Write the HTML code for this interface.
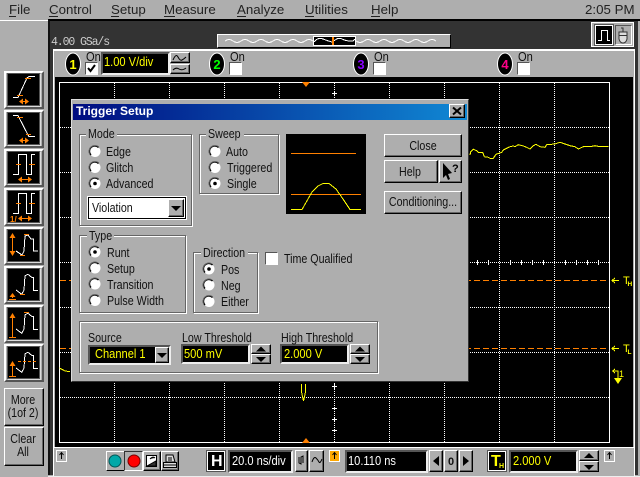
<!DOCTYPE html>
<html><head><meta charset="utf-8"><style>
html,body{margin:0;padding:0}
body{width:640px;height:477px;position:relative;overflow:hidden;background:#aeaeae}
div{position:absolute;box-sizing:border-box}
svg{position:absolute;left:0;top:0}
.r{background:#aeaeae;border:1px solid;border-color:#fff #000 #000 #fff;box-shadow:inset -1px -1px 0 #666}
.p{background:#aeaeae;border:1px solid;border-color:#fff #555 #555 #fff;border-width:2px}
.k{background:#000;border:2px solid;border-color:#555 #eee #eee #555}
.e{border:1px solid #666;box-shadow:1px 1px 0 #fff,inset 1px 1px 0 #fff}
.i{background:#000;left:7px;width:33px;height:33px;border:1px solid #555;box-shadow:1px 1px 0 #ddd}
text{font-family:"Liberation Sans",sans-serif;font-size:12.5px;fill:#111;transform-box:fill-box;transform-origin:0 100%;transform:scaleX(.855)}
.m{font-size:13.3px;fill:#222;transform:none}
.n{transform:none}
.y{fill:#ff0;font-size:13px}
.w{fill:#fff;font-size:13px}
.c{text-anchor:middle;transform-origin:50% 100%}
.ln{fill:none;stroke:#fff;stroke-width:1;shape-rendering:crispEdges}
.o{fill:none;stroke:#ff8000;stroke-width:1;shape-rendering:crispEdges}
.ye{fill:none;stroke:#ff0;stroke-width:1;shape-rendering:crispEdges}
.wv{fill:none;stroke:#fff;stroke-width:1;shape-rendering:crispEdges}
.or{fill:#ff8000}
</style></head><body>
<!-- main frame -->
<div style="left:0;top:20px;width:48px;height:1px;background:#fff"></div>
<div style="left:48px;top:19px;width:592px;height:456px;background:#333;border-top:2px solid #000;border-left:2px solid #111"></div>
<div style="left:638px;top:21px;width:2px;height:456px;background:#aeaeae"></div>
<div style="left:48px;top:476px;width:592px;height:1px;background:#eee"></div>
<!-- top strip -->
<div style="left:217px;top:34px;width:234px;height:14px;background:#aeaeae;border:1px solid;border-color:#fff #000 #000 #fff"></div>
<div style="left:313px;top:36px;width:43px;height:10px;background:#000;border:1px solid #fff"></div>
<div style="left:332px;top:37px;width:2px;height:8px;background:#ff8000"></div>
<div style="left:591px;top:22px;width:43px;height:25px;background:#aeaeae;border:1px solid #fff"></div>
<div style="left:595px;top:25px;width:18px;height:20px;background:#000;border:1px solid #fff;box-shadow:0 0 0 1px #555"></div>
<div style="left:615px;top:25px;width:17px;height:20px;background:#aeaeae;border:1px solid;border-color:#555 #fff #fff #555"></div>
<!-- panel -->
<div style="left:53px;top:49px;width:582px;height:427px;background:#aeaeae;border-top:2px solid #fff;border-left:1px solid #fff;border-right:1px solid #fff"></div>
<div style="left:55px;top:77px;width:578px;height:370px;background:#000"></div>
<div style="left:54px;top:447px;width:580px;height:1px;background:#fff"></div>
<div style="left:59px;top:82px;width:551px;height:361px;border:1px solid #fff"></div>
<!-- channel controls -->
<div class="k" style="left:101px;top:52px;width:69px;height:23px"></div>
<div class="r" style="left:170px;top:52px;width:20px;height:11px"></div>
<div class="r" style="left:170px;top:64px;width:20px;height:10px"></div>
<div style="left:85px;top:62px;width:13px;height:13px;background:#fff;border:1px solid;border-color:#555 #fff #fff #555"></div>
<div style="left:229px;top:62px;width:13px;height:13px;background:#fff;border:1px solid;border-color:#555 #fff #fff #555"></div>
<div style="left:373px;top:62px;width:13px;height:13px;background:#fff;border:1px solid;border-color:#555 #fff #fff #555"></div>
<div style="left:517px;top:62px;width:13px;height:13px;background:#fff;border:1px solid;border-color:#555 #fff #fff #555"></div>
<!-- left buttons -->
<div class="p" style="left:4px;top:71px;width:40px;height:38px"></div><div class="i" style="top:73px"></div>
<div class="p" style="left:4px;top:110px;width:40px;height:38px"></div><div class="i" style="top:112px"></div>
<div class="p" style="left:4px;top:149px;width:40px;height:38px"></div><div class="i" style="top:151px"></div>
<div class="p" style="left:4px;top:188px;width:40px;height:38px"></div><div class="i" style="top:190px"></div>
<div class="p" style="left:4px;top:227px;width:40px;height:38px"></div><div class="i" style="top:229px"></div>
<div class="p" style="left:4px;top:266px;width:40px;height:38px"></div><div class="i" style="top:268px"></div>
<div class="p" style="left:4px;top:305px;width:40px;height:38px"></div><div class="i" style="top:307px"></div>
<div class="p" style="left:4px;top:344px;width:40px;height:38px"></div><div class="i" style="top:346px"></div>
<div class="r" style="left:4px;top:388px;width:40px;height:38px"></div>
<div class="r" style="left:4px;top:427px;width:40px;height:39px"></div>
<!-- bottom bar -->
<div style="left:56px;top:450px;width:11px;height:12px;border:1px solid #fff"></div>
<div style="left:106px;top:451px;width:19px;height:20px;background:#aeaeae;border:1px solid;border-color:#fff #000 #000 #fff"></div>
<div style="left:124px;top:451px;width:19px;height:20px;background:#aeaeae;border:1px solid;border-color:#333 #fff #fff #333"></div>
<div class="r" style="left:143px;top:451px;width:18px;height:20px"></div>
<div class="r" style="left:161px;top:451px;width:18px;height:20px"></div>
<div style="left:207px;top:451px;width:18px;height:20px;background:#000;border:1px solid #fff;outline:1px solid #555"></div>
<div class="k" style="left:228px;top:450px;width:65px;height:23px"></div>
<div class="r" style="left:295px;top:450px;width:13px;height:22px"></div>
<div class="r" style="left:309px;top:450px;width:15px;height:22px"></div>
<div style="left:329px;top:450px;width:11px;height:12px;background:#ffa800;border:1px solid #fff"></div>
<div class="k" style="left:345px;top:450px;width:83px;height:23px"></div>
<div class="r" style="left:429px;top:450px;width:14px;height:22px"></div>
<div class="r" style="left:444px;top:450px;width:14px;height:22px"></div>
<div class="r" style="left:459px;top:450px;width:14px;height:22px"></div>
<div style="left:488px;top:451px;width:18px;height:20px;background:#000;border:1px solid #fff;outline:1px solid #555"></div>
<div class="k" style="left:509px;top:450px;width:69px;height:23px"></div>
<div class="r" style="left:579px;top:450px;width:20px;height:11px"></div>
<div class="r" style="left:579px;top:461px;width:20px;height:11px"></div>
<div style="left:604px;top:450px;width:11px;height:12px;border:1px solid #fff"></div>

<!-- graph -->
<svg width="640" height="477" viewBox="0 0 640 477">
<g class="ln" stroke-dasharray="1 1">
<path d="M114.5 83V442M169.5 83V442M224.5 83V442M279.5 83V442M334.5 83V442M389.5 83V442M444.5 83V442M499.5 83V442M554.5 83V442"/>
<path d="M60 127.5H609M60 172.5H609M60 217.5H609M60 262.5H609M60 307.5H609M60 352.5H609M60 397.5H609"/>
</g>
<path class="ln" d="M477.5 260V265M488.5 260V265M510.5 260V265M521.5 260V265M532.5 260V265M543.5 260V265M565.5 260V265M576.5 260V265M587.5 260V265M598.5 260V265M332 93.5H337M334.5 91V96M332 386.5H337M334.5 384V389M332 408.5H337M332 419.5H337M334.5 417V422M332 430.5H337"/>
<path class="o" stroke-dasharray="6 3" d="M60 280.5H609M60 348.5H609"/>
<path class="or" d="M302 82H310L306 87ZM302 443H310L306 438Z"/>
<polyline class="ye" points="470,155 470.7,151.7 473.3,149.3 476.7,150.7 478.3,152.3 482.7,152.3 484.3,156.7 488.3,157.3 490,158.3 493.3,158.3 496,154.3 501.7,152.3 503.3,150 506.7,148.3 510,146.7 513.3,146 515,146.7 518.3,144.7 523.3,146 526.7,147.3 530,149 533.3,145.7 536,144.3 540,146.7 545,147.3 546.7,144.7 555,144 556.7,143.3 560,142.3 565,144 570,145.7 575,146.7 578.3,149 583.3,146.7 590,146.7 595,145.7 600,146.7 608.3,146.3"/>
<polyline class="ye" points="59.5,368 65,371 70,371.7"/>
<path class="ye" d="M301.5 384V392L303.5 401L305.5 392V384"/>
<!-- right markers -->
<path class="ye" d="M612 280.5H619M612 348.5H619M615 278L612 280.5L615 283M615 346L612 348.5L615 351"/>
<path class="ye" d="M612.5 371H618V381M612.5 371L615 369M612.5 371L615 373"/>
<path fill="#ff0" d="M614 378H622L618 384Z"/>
</svg>

<!-- dialog -->
<div style="left:71px;top:99px;width:398px;height:283px;background:#aeaeae;border:1px solid;border-color:#ddd #333 #333 #ddd"></div>
<div style="left:73px;top:104px;width:394px;height:16px;background:linear-gradient(90deg,#000c80,#1088d4)"></div>
<div class="r" style="left:449px;top:104px;width:16px;height:14px;background:#aeaeae"></div>
<div class="e" style="left:79px;top:134px;width:113px;height:92px"></div>
<div class="e" style="left:199px;top:134px;width:80px;height:60px"></div>
<div class="e" style="left:79px;top:235px;width:107px;height:78px"></div>
<div class="e" style="left:193px;top:252px;width:65px;height:61px"></div>
<div class="e" style="left:79px;top:321px;width:299px;height:52px"></div>
<div style="left:86px;top:128px;width:31px;height:12px;background:#aeaeae"></div>
<div style="left:206px;top:128px;width:38px;height:12px;background:#aeaeae"></div>
<div style="left:87px;top:230px;width:27px;height:12px;background:#aeaeae"></div>
<div style="left:201px;top:247px;width:47px;height:12px;background:#aeaeae"></div>
<div style="left:286px;top:134px;width:80px;height:80px;background:#000"></div>
<div class="r" style="left:384px;top:134px;width:78px;height:23px"></div>
<div class="r" style="left:384px;top:160px;width:54px;height:23px"></div>
<div class="r" style="left:439px;top:160px;width:23px;height:23px"></div>
<div class="r" style="left:384px;top:191px;width:78px;height:23px"></div>
<div style="left:88px;top:197px;width:98px;height:22px;background:#fff;border:1px solid #000;outline:1px solid #fff"></div>
<div class="r" style="left:168px;top:199px;width:16px;height:18px"></div>
<div style="left:265px;top:252px;width:13px;height:13px;background:#fff;border:1px solid;border-color:#555 #fff #fff #555"></div>
<div class="k" style="left:88px;top:345px;width:83px;height:20px"></div>
<div class="r" style="left:155px;top:347px;width:14px;height:16px"></div>
<div class="k" style="left:181px;top:344px;width:69px;height:20px"></div>
<div class="r" style="left:251px;top:344px;width:20px;height:10px"></div>
<div class="r" style="left:251px;top:354px;width:20px;height:10px"></div>
<div class="k" style="left:280px;top:344px;width:69px;height:20px"></div>
<div class="r" style="left:350px;top:344px;width:20px;height:10px"></div>
<div class="r" style="left:350px;top:354px;width:20px;height:10px"></div>

<!-- top layer -->
<svg width="640" height="477" viewBox="0 0 640 477">
<defs>
<g id="rd"><circle r="5.5" fill="#fff"/><path d="M-4 3.5A5.3 5.3 0 0 1 3.5 -4" fill="none" stroke="#000" stroke-width="1.4"/><path d="M-5.2 3A6 6 0 0 1 3 -5.2" fill="none" stroke="#666"/></g>
<g id="rs"><use href="#rd"/><circle r="1.8" fill="#000"/></g>
<path id="up" d="M0 -3L-5 2H5Z" fill="#000"/>
<path id="dn" d="M0 3L-5 -2H5Z" fill="#000"/>
</defs>
<!-- menu -->
<text class="m" x="9" y="14">File</text><path d="M9 16.5H16M49 16.5H58M111 16.5H119M164 16.5H175M237 16.5H246M305 16.5H314M371 16.5H380" stroke="#222" stroke-width="1" shape-rendering="crispEdges"/>
<text class="m" x="49" y="14">Control</text>
<text class="m" x="111" y="14">Setup</text>
<text class="m" x="164" y="14">Measure</text>
<text class="m" x="237" y="14">Analyze</text>
<text class="m" x="305" y="14">Utilities</text>
<text class="m" x="371" y="14">Help</text>
<text class="m" x="585" y="14">2:05 PM</text>
<text class="n" x="51" y="45" style="font-family:'Liberation Mono',monospace;font-size:11.5px;letter-spacing:-1.1px;fill:#ccc">4.00 GSa/s</text>
<!-- overview wave -->
<path class="wv" d="M225 41q4 -3 8 0t8 0t8 0t8 0t8 0t8 0t8 0t8 0t8 0t8 0t8 0M314 42q4 -5 9 -3t9 3M334 41q4 -4 8 -2t8 2q3 1 5 -2"/>
<path class="wv" d="M356 41q4 3 8 0t8 0t8 0t8 0t8 0t8 0t8 0t8 0t8 0t8 0"/>
<path class="ln" d="M598 40.500H601.500V30.500H607.500V40.500H610"/>
<path fill="#ddd" stroke="#333" d="M619 32h8v7q-1 4 -4 4t-4 -4z"/><path class="ln" style="stroke:#333" d="M621 28H623V32M619 35.500H627"/>
<!-- channel pills -->
<g stroke="#fff" fill="#000"><ellipse cx="73" cy="64" rx="7.500" ry="11"/><ellipse cx="217" cy="64" rx="7.500" ry="11"/><ellipse cx="361" cy="64" rx="7.500" ry="11"/><ellipse cx="505" cy="64" rx="7.500" ry="11"/></g>
<text class="c n" x="73" y="69" style="font-size:13px;font-weight:bold;fill:#ff0">1</text>
<text class="c n" x="217" y="69" style="font-size:13px;font-weight:bold;fill:#0f0">2</text>
<text class="c n" x="361" y="69" style="font-size:13px;font-weight:bold;fill:#80f">3</text>
<text class="c n" x="505" y="69" style="font-size:13px;font-weight:bold;fill:#f08">4</text>
<text x="86" y="61" style="font-size:13px">On</text><text x="230" y="61" style="font-size:13px">On</text><text x="374" y="61" style="font-size:13px">On</text><text x="518" y="61" style="font-size:13px">On</text>
<path d="M88 68L90.500 71L95 65" fill="none" stroke="#000" stroke-width="2"/>
<text class="y" x="104" y="66">1.00 V/div</text>
<path d="M173 60q3 -7 5 -3t4 3t4 -3M173 70q3 -3 6 -1t7 -1" fill="none" stroke="#000"/>
<!-- left icons -->
<polyline class="ln" points="13,97.500 18,97.500 27,78 29,76.500 35,76.500"/>
<path class="o" d="M25 78.500H31M17 95.500H23"/><path class="or" d="M19 101.500l4 -3v6zM29 101.500l-4 -3v6z"/><path class="o" d="M20 101.500H28"/>
<polyline class="ln" points="13,115.500 18,115.500 28,135 29,136.500 35,136.500"/>
<path class="o" d="M17 117.500H23M26 134.500H31"/><path class="or" d="M19 140.500l4 -3v6zM29 140.500l-4 -3v6z"/><path class="o" d="M20 140.500H28"/>
<polyline class="ln" points="13,174.500 18.500,174.500 18.500,154.500 26.500,154.500 26.500,174.500 31.500,174.500 31.500,154.500 35,154.500"/>
<path class="o" d="M16 164.500H21M29 164.500H35M20 179.500H30"/><path class="or" d="M18 179.500l4 -3v6zM32 179.500l-4 -3v6z"/>
<polyline class="ln" points="13,213.500 18.500,213.500 18.500,193.500 26.500,193.500 26.500,213.500 31.500,213.500 31.500,193.500 35,193.500"/>
<path class="o" d="M16 203.500H21M29 203.500H35M20 218.500H30"/><path class="or" d="M18 218.500l4 -3v6zM32 218.500l-4 -3v6z"/>
<text class="n" x="10" y="222" style="font-size:8px;fill:#ff8000;font-weight:bold">1/</text>
<polyline class="ln" points="16,251 22,255 24,251 25,236 28,235 31,239 33.500,239 33.500,251 38,251"/>
<path class="o" d="M24 234.500H29M20 255.500H25M12.500 236V254"/><path class="or" d="M12.500 233l-3 5h6zM12.500 256l-3 -5h6z"/>
<polyline class="ln" points="16,290 21.700,294.300 24,290 25,275.700 28,274.300 31.700,277.300 33.500,277.300 33.500,290.700 38,290.700"/>
<path class="o" d="M20 294.500H25M9 299.500H16M12.500 296V298"/><path class="or" d="M12.500 293l-3 4h6z"/>
<polyline class="ln" points="16,329 21.700,333.300 24,329 25,314.700 28,313.300 31.700,316.300 33.500,316.300 33.500,329.700 38,329.700"/>
<path class="o" d="M24 312.500H29M9 337.500H16M12.500 316V337"/><path class="or" d="M12.500 313l-3 5h6z"/>
<polyline class="ln" points="16,368 21.700,372.300 24,368 25,353.700 28,352.300 31.700,355.300 33.500,355.300 33.500,368.700 38,368.700"/>
<path class="o" stroke-dasharray="3 2" d="M18 361.500H38"/><path class="o" d="M9 376.500H16M12.500 364V376"/><path class="or" d="M12.500 361l-3 5h6z"/>
<text class="c" x="23" y="404">More</text><text class="c" x="23" y="417">(1of 2)</text><text class="c" x="23" y="443">Clear</text><text class="c" x="23" y="456">All</text>
<!-- bottom icons -->
<path d="M61.500 459V453M59.500 455L61.500 452.500L63.500 455" fill="none" stroke="#000"/>
<circle cx="115" cy="461" r="6" fill="#00a8a8" stroke="#055"/><circle cx="134" cy="461" r="6" fill="#f00" stroke="#700"/>
<path fill="#fff" stroke="#000" d="M146.500 455.500h10v11h-10z"/><path d="M150 459q3 -3 5 -1M147 466l9 -5v5z" fill="#333" stroke="#000"/>
<path fill="#ddd" stroke="#000" d="M163.500 462.500h13v5h-13zM166 455l7 0l2 7h-9z"/><path stroke="#000" d="M168 458H172M168 460H172M164 465H176"/>
<text class="w n" x="211" y="466" style="font-size:16px;font-weight:bold">H</text>
<text class="w" x="232" y="465">20.0 ns/div</text>
<path d="M299 457v6l2 1v-7l2 -1v7M312 462q2 -6 4 -4t3 4t3 -3" fill="none" stroke="#000"/>
<path d="M334.500 459V453M332.500 455L334.500 452.500L336.500 455" fill="none" stroke="#000"/>
<text class="w" x="348" y="465">10.110 ns</text>
<path d="M433 461l6 -5v10zM469 461l-6 -5v10z" fill="#000"/>
<text class="c n" x="451" y="465" style="font-size:11px;font-weight:bold">0</text>
<text class="n" x="491" y="466" style="font-size:16px;font-weight:bold;fill:#ff0">T</text><text class="n" x="499" y="468" style="font-size:7px;font-weight:bold;fill:#ff0">H</text>
<text class="y" x="513" y="465">2.000 V</text>
<use href="#up" x="589" y="456"/><use href="#dn" x="589" y="467"/>
<path d="M609.500 459V453M607.500 455L609.500 452.500L611.500 455" fill="none" stroke="#000"/>
<!-- T marks -->
<text class="n" x="623" y="284" style="font-size:11px;fill:#ff0">T</text><text class="n" x="627.500" y="286" style="font-size:6.500px;font-weight:bold;fill:#ff0">H</text>
<text class="n" x="623" y="352" style="font-size:11px;fill:#ff0">T</text><text class="n" x="627.500" y="354" style="font-size:6.500px;font-weight:bold;fill:#ff0">L</text>
<text class="n" x="619" y="377" style="font-size:9px;fill:#ff0">1</text>
<!-- dialog text -->
<text class="n" x="76" y="115" style="font-size:12px;font-weight:bold;fill:#fff">Trigger Setup</text>
<path d="M453 107.500L461 114.500M461 107.500L453 114.500" stroke="#000" stroke-width="2"/>
<text x="88" y="138">Mode</text><text x="208" y="138">Sweep</text><text x="89" y="240">Type</text><text x="203" y="257">Direction</text>
<text x="106" y="156">Edge</text><text x="106" y="172">Glitch</text><text x="106" y="188">Advanced</text>
<text x="226" y="156">Auto</text><text x="227" y="172">Triggered</text><text x="227" y="188">Single</text>
<use href="#rd" x="95" y="151.500"/><use href="#rd" x="95" y="167.500"/><use href="#rs" x="95" y="183.500"/>
<use href="#rd" x="215" y="151.500"/><use href="#rd" x="215" y="167.500"/><use href="#rs" x="215" y="183.500"/>
<text x="92" y="212">Violation</text><use href="#dn" x="176" y="208"/>
<path class="o" d="M291 153.500H356M291 194.500H361"/>
<polyline class="ye" points="291,209.500 302,209.500 312,192 318,186 323,183.500 329,183.500 336,189 343,199 350,209.500 361,209.500"/>
<text class="c" x="423" y="150">Close</text>
<text class="c" x="410" y="176">Help</text>
<text class="c" x="423" y="206">Conditioning...</text>
<path d="M443 163V178L446 175L448 180L450 179L448 174L452 173Z" fill="#000"/>
<text class="n" x="452" y="172" style="font-size:11px;font-weight:bold;fill:#000">?</text>
<use href="#rs" x="95" y="252"/><use href="#rd" x="95" y="268"/><use href="#rd" x="95" y="284"/><use href="#rd" x="95" y="300.500"/>
<text x="107" y="257">Runt</text><text x="107" y="273">Setup</text><text x="107" y="289">Transition</text><text x="107" y="305">Pulse Width</text>
<use href="#rs" x="209" y="269"/><use href="#rd" x="209" y="285"/><use href="#rd" x="209" y="301.500"/>
<text x="221" y="274">Pos</text><text x="221" y="290">Neg</text><text x="221" y="306">Either</text>
<text x="284" y="263">Time Qualified</text>
<text x="88" y="342">Source</text><text x="182" y="342">Low Threshold</text><text x="281" y="342">High Threshold</text>
<text class="y" x="95" y="358">Channel 1</text><use href="#dn" x="162" y="355"/>
<text class="y" x="184" y="358">500 mV</text><text class="y" x="284" y="358">2.000 V</text>
<use href="#up" x="261" y="349.500"/><use href="#dn" x="261" y="359"/><use href="#up" x="360" y="349.500"/><use href="#dn" x="360" y="359"/>
</svg>
</body></html>
